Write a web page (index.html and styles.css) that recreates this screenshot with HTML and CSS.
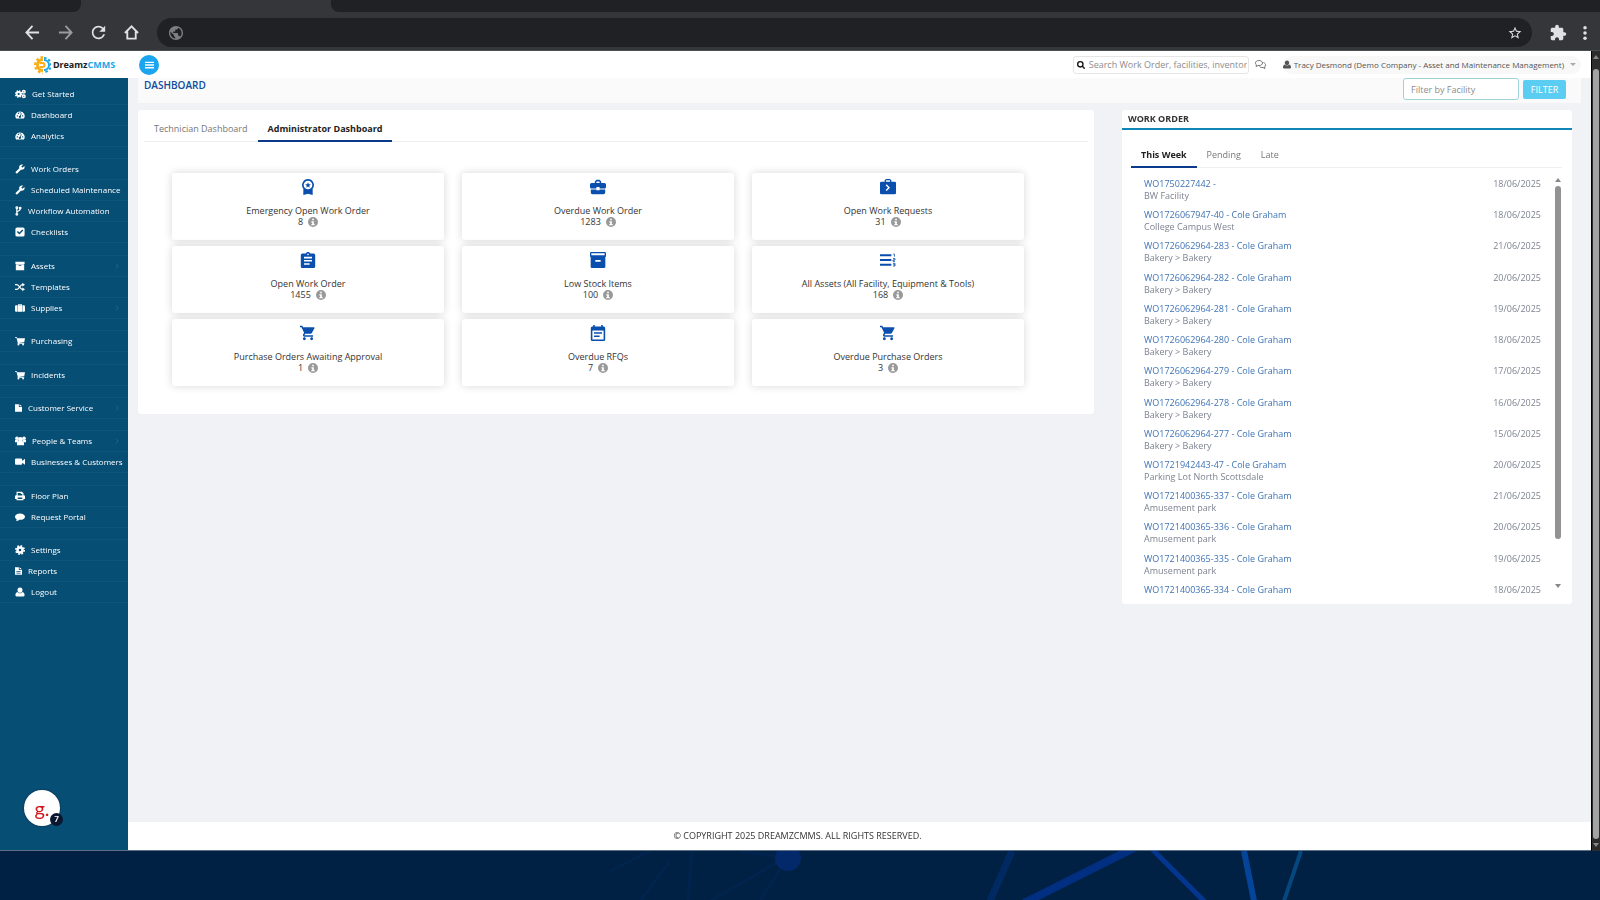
FILE: index.html
```
<!DOCTYPE html>
<html lang="en">
<head>
    <meta charset="UTF-8">
    <meta name="viewport" content="width=device-width, initial-scale=1.0">
    <title>Dashboard - DreamzCMMS</title>
    <link rel="stylesheet" href="styles.css">
</head>
<body>

    <!-- Icon set -->
    <svg class="icon-set" aria-hidden="true">
        <symbol id="gear" viewBox="0 0 24 24"><circle cx="12" cy="12" r="6" fill="none" stroke="currentColor" stroke-width="6"/><circle cx="12" cy="12" r="10" fill="none" stroke="currentColor" stroke-width="4" stroke-dasharray="4 3.85"/></symbol>
        <symbol id="gears" viewBox="0 0 30 24"><circle cx="10" cy="12" r="5.500" fill="none" stroke="currentColor" stroke-width="5"/><circle cx="10" cy="12" r="8.500" fill="none" stroke="currentColor" stroke-width="4" stroke-dasharray="3.500 3.170"/><circle cx="24" cy="6" r="3.500" fill="none" stroke="currentColor" stroke-width="4"/><circle cx="24" cy="18" r="3.500" fill="none" stroke="currentColor" stroke-width="4"/></symbol>
        <symbol id="gauge" viewBox="0 0 28 24"><path fill="currentColor" fill-rule="evenodd" d="M14 2a13 13 0 0 0-11 20h22A13 13 0 0 0 14 2zM5 13h3v3H5zm3-7h3v3H8zm5-2h3v3h-3zm7 9h3v3h-3zm-3-6 2 1-3 7a3 3 0 1 1-2-1z"/></symbol>
        <symbol id="wrench" viewBox="0 0 24 24"><path fill="currentColor" transform="matrix(-1 0 0 1 24 0)" d="M22.7 19l-9.1-9.1c.9-2.3.4-5-1.5-6.9-2-2-5-2.4-7.4-1.3L9 6 6 9 1.6 4.7C.4 7.1.9 10.1 2.9 12.1c1.9 1.9 4.6 2.4 6.9 1.5l9.1 9.1c.4.4 1 .4 1.4 0l2.3-2.3c.5-.4.5-1.1.1-1.4z"/></symbol>
        <symbol id="fork" viewBox="0 0 16 24"><g fill="none" stroke="currentColor" stroke-width="3"><circle cx="4" cy="4" r="2"/><circle cx="4" cy="20" r="2"/><circle cx="12" cy="5" r="2"/><path d="M4 6v12M12 7c0 6-8 4-8 9"/></g></symbol>
        <symbol id="check" viewBox="0 0 24 24"><path fill="currentColor" fill-rule="evenodd" d="M5 1h14a4 4 0 0 1 4 4v14a4 4 0 0 1-4 4H5a4 4 0 0 1-4-4V5a4 4 0 0 1 4-4zm5.500 17L20 8.500 17.500 6l-7 7L7 9.500 4.500 12z"/></symbol>
        <symbol id="archive" viewBox="0 0 24 24"><path fill="currentColor" fill-rule="evenodd" d="M1 2h22v5H1zm1 6h20v14H2zm7 2v2h6v-2z"/></symbol>
        <symbol id="random" viewBox="0 0 26 24"><path fill="none" stroke="currentColor" stroke-width="3.500" d="M0 6h5c6 0 8 12 14 12h2M0 18h5c6 0 8-12 14-12h2"/><path fill="currentColor" d="M19 1l7 5-7 5zM19 13l7 5-7 5z"/></symbol>
        <symbol id="suitcase" viewBox="0 0 26 24"><path fill="currentColor" fill-rule="evenodd" d="M8 5V2h10v3h1v17H7V5zm2 0h6V4h-6zM0 8a3 3 0 0 1 3-3h3v17H3a3 3 0 0 1-3-3zM20 5h3a3 3 0 0 1 3 3v11a3 3 0 0 1-3 3h-3z"/></symbol>
        <symbol id="cart-small" viewBox="0 0 26 24"><path fill="currentColor" d="M0 2h5l1 3h20l-2 10-15 2v1h15v2H7v-4L4 4H0z"/><circle cx="9" cy="21" r="2.500" fill="currentColor"/><circle cx="21" cy="21" r="2.500" fill="currentColor"/></symbol>
        <symbol id="file" viewBox="0 0 20 24"><path fill="currentColor" d="M0 1h11v8h9v14H0zM13 1l7 6h-7z"/></symbol>
        <symbol id="file-text" viewBox="0 0 20 24"><path fill="currentColor" fill-rule="evenodd" d="M0 1h11v8h9v14H0zM13 1l7 6h-7zM4 12v2h12v-2zm0 5v2h12v-2z"/></symbol>
        <symbol id="users" viewBox="0 0 28 24"><g fill="currentColor"><circle cx="14" cy="8" r="6"/><circle cx="5" cy="5" r="4.500"/><circle cx="23" cy="5" r="4.500"/><path d="M5 23v-5c0-4 3-6 5-6h8c2 0 5 2 5 6v5zM0 9h9l-3 6H0zM28 9h-9l3 6h6z"/></g></symbol>
        <symbol id="video" viewBox="0 0 28 24"><path fill="currentColor" d="M3 2h14a3 3 0 0 1 3 3v4l8-6v17l-8-6v3a3 3 0 0 1-3 3H3a3 3 0 0 1-3-3V5a3 3 0 0 1 3-3z"/></symbol>
        <symbol id="print" viewBox="0 0 26 24"><path fill="currentColor" fill-rule="evenodd" d="M4 1h14l4 4v5h1a3 3 0 0 1 3 3v7h-4v3H4v-3H0v-7a3 3 0 0 1 3-3h1zm3 3v7h12V7h-4V4zm0 12v4h12v-4z"/></symbol>
        <symbol id="comment" viewBox="0 0 28 24"><path fill="currentColor" d="M14 2c8 0 14 4 14 9s-6 9-14 9h-2c-3 3-6 4-10 4 2-2 3-3 3-5-3-2-5-5-5-8 0-5 6-9 14-9z"/></symbol>
        <symbol id="user" viewBox="0 0 22 24"><path fill="currentColor" d="M11 1c4 0 6 3 6 6 0 4-2 7-6 7s-6-3-6-7c0-3 2-6 6-6zM5 12c2 4 10 4 12 0 4 1 5 5 5 8 0 2-2 3-4 3H4c-2 0-4-1-4-3 0-3 1-7 5-8z"/></symbol>
        <symbol id="cart" viewBox="0 0 24 24"><path fill="currentColor" d="M7 18c-1.1 0-1.99.9-1.99 2S5.9 22 7 22s2-.9 2-2-.9-2-2-2zM1 2v2h2l3.6 7.59-1.35 2.45c-.16.28-.25.61-.25.96 0 1.1.9 2 2 2h12v-2H7.42c-.14 0-.25-.11-.25-.25l.03-.12.9-1.63h7.45c.75 0 1.41-.41 1.75-1.03l3.58-6.49c.08-.14.12-.31.12-.48 0-.55-.45-1-1-1H5.21l-.94-2H1zm16 16c-1.1 0-1.99.9-1.99 2s.89 2 1.99 2 2-.9 2-2-.9-2-2-2z"/></symbol>
        <symbol id="info" viewBox="0 0 24 24"><path fill="currentColor" fill-rule="evenodd" d="M12 0a12 12 0 1 0 0 24 12 12 0 0 0 0-24zM10 4h4v4h-4zm-2 6h6v7h2v3H8v-3h2v-4H8z"/></symbol>
        <symbol id="chevron" viewBox="0 0 8 12"><path fill="none" stroke="currentColor" stroke-width="1.500" d="M2 1l4 5-4 5"/></symbol>
    </svg>

    <!-- Browser bar -->
    <div class="browser">
        <div class="tab-strip">
            <div class="tab-left"></div>
            <div class="tab-right"></div>
        </div>
        <div class="toolbar">
            <button class="nav-button" aria-label="Back"><svg viewBox="0 0 16 16"><path fill="none" stroke="currentColor" stroke-width="2" d="M15 8H2M8 1L1.500 8 8 15"/></svg></button>
            <button class="nav-button dim" aria-label="Forward"><svg viewBox="0 0 16 16"><path fill="none" stroke="currentColor" stroke-width="2" d="M1 8h13M8 1l6.500 7L8 15"/></svg></button>
            <button class="nav-button" aria-label="Reload"><svg viewBox="3 3 18 18"><path fill="currentColor" d="M17.650 6.350C16.200 4.900 14.210 4 12 4c-4.420 0-7.990 3.580-7.990 8s3.570 8 7.990 8c3.730 0 6.840-2.550 7.730-6h-2.080c-.82 2.330-3.040 4-5.650 4-3.310 0-6-2.690-6-6s2.690-6 6-6c1.660 0 3.140.69 4.220 1.780L13 11h7V4l-2.350 2.350z"/></svg></button>
            <button class="nav-button" aria-label="Home"><svg viewBox="0 0 16 16"><path fill="none" stroke="currentColor" stroke-width="2" d="M1 8.500L8 1.500l7 7M3.500 7v7.500h9V7"/></svg></button>
            <div class="address-bar">
                <svg class="globe" viewBox="2 2 20 20"><path fill="currentColor" d="M12 2C6.480 2 2 6.480 2 12s4.480 10 10 10 10-4.480 10-10S17.520 2 12 2zm-1 17.930c-3.950-.49-7-3.850-7-7.930 0-.62.08-1.210.21-1.790L9 15v1c0 1.100.9 2 2 2v1.930zm6.900-2.540c-.26-.81-1-1.390-1.900-1.390h-1v-3c0-.55-.45-1-1-1H8v-2h2c.55 0 1-.45 1-1V7h2c1.100 0 2-.9 2-2v-.41c2.930 1.190 5 4.060 5 7.410 0 2.080-.8 3.970-2.100 5.390z"/></svg>
                <svg class="star" viewBox="1 1 22 22"><path fill="currentColor" d="M22 9.240l-7.190-.62L12 2 9.190 8.630 2 9.240l5.460 4.730L5.820 21 12 17.270 18.180 21l-1.630-7.030L22 9.240zM12 15.400l-3.760 2.270 1-4.280-3.320-2.880 4.380-.38L12 6.100l1.710 4.040 4.380.38-3.320 2.880 1 4.280L12 15.400z"/></svg>
            </div>
            <button class="nav-button puzzle" aria-label="Extensions"><svg viewBox="1 0 23 23"><path fill="currentColor" d="M20.500 11H19V7c0-1.100-.9-2-2-2h-4V3.500C13 2.120 11.880 1 10.500 1S8 2.120 8 3.500V5H4c-1.100 0-1.990.9-1.990 2v3.800H3.500c1.490 0 2.700 1.210 2.700 2.700s-1.210 2.700-2.700 2.700H2V20c0 1.100.9 2 2 2h3.800v-1.500c0-1.490 1.210-2.700 2.700-2.700 1.490 0 2.700 1.210 2.700 2.700V22H17c1.100 0 2-.9 2-2v-4h1.500c1.380 0 2.500-1.120 2.500-2.500S21.880 11 20.500 11z"/></svg></button>
            <button class="nav-button dots" aria-label="Menu"><svg viewBox="0 0 4 16"><g fill="currentColor"><circle cx="2" cy="2" r="2"/><circle cx="2" cy="8" r="2"/><circle cx="2" cy="14" r="2"/></g></svg></button>
        </div>
    </div>

    <div class="window">
        <div class="app">

            <!-- Header -->
            <header class="header">
                <a href="#" class="logo">
                    <svg class="logo-mark" viewBox="0 0 36 36">
                        <g fill="none" stroke="#f9ae19"><path stroke-width="6" d="M20 7a11 11 0 1 0 0 22"/><path stroke-width="5" stroke-dasharray="5 4.500" d="M20 2.500a15.500 15.500 0 1 0 0 31"/><path stroke-width="4" d="M13 14h6a4 4 0 0 1 0 8h-6"/></g>
                        <g fill="none" stroke="#1ba7e8"><path stroke-width="4" d="M22 8a10 10 0 0 1 0 20"/><path stroke-width="4" stroke-dasharray="5 4" d="M22 4a14 14 0 0 1 0 28"/></g>
                    </svg>
                    <span>Dreamz<span class="logo-blue">CMMS</span></span>
                </a>
                <button class="menu-toggle" aria-label="Toggle menu"><svg viewBox="0 0 10 8"><path stroke="currentColor" stroke-width="1.500" d="M0 1h10M0 4h10M0 7h10"/></svg></button>
                <div class="search-box">
                    <label for="search" aria-label="Search"><svg viewBox="0 0 12 12"><g fill="none" stroke="currentColor" stroke-width="2"><circle cx="5" cy="5" r="4"/><path d="M8 8l3.500 3.500"/></g></svg></label>
                    <input type="text" id="search" placeholder="Search Work Order, facilities, inventory">
                </div>
                <a href="#" class="chat" aria-label="Messages"><svg viewBox="0 0 22 18"><path fill="none" stroke="currentColor" stroke-width="2" d="M8 1c4 0 7 2 7 5s-3 5-7 5H6l-4 2 1-3C1 9 1 7 1 6c0-3 3-5 7-5zM17 5c3 1 4 3 4 5s-1 3-2 4l1 3-4-2c-3 0-6 0-7-2"/></svg></a>
                <button class="account">
                    <svg class="account-icon"><use href="#user"/></svg>
                    Tracy Desmond (Demo Company - Asset and Maintenance Management)
                    <span class="caret"></span>
                </button>
            </header>

            <!-- Sidebar -->
            <nav class="sidebar">
                <div class="menu">
                    <ul>
                        <li><a href="#"><svg class="wide"><use href="#gears"/></svg>Get Started</a></li>
                        <li><a href="#"><svg><use href="#gauge"/></svg>Dashboard</a></li>
                        <li><a href="#"><svg><use href="#gauge"/></svg>Analytics</a></li>
                    </ul>
                    <ul>
                        <li><a href="#"><svg><use href="#wrench"/></svg>Work Orders</a></li>
                        <li><a href="#"><svg><use href="#wrench"/></svg>Scheduled Maintenance</a></li>
                        <li><a href="#"><svg class="narrow"><use href="#fork"/></svg>Workflow Automation</a></li>
                        <li><a href="#"><svg><use href="#check"/></svg>Checklists</a></li>
                    </ul>
                    <ul>
                        <li><a href="#"><svg><use href="#archive"/></svg>Assets<svg class="arrow"><use href="#chevron"/></svg></a></li>
                        <li><a href="#"><svg><use href="#random"/></svg>Templates</a></li>
                        <li><a href="#"><svg><use href="#suitcase"/></svg>Supplies<svg class="arrow"><use href="#chevron"/></svg></a></li>
                    </ul>
                    <ul>
                        <li><a href="#"><svg><use href="#cart-small"/></svg>Purchasing</a></li>
                    </ul>
                    <ul>
                        <li><a href="#"><svg><use href="#cart-small"/></svg>Incidents</a></li>
                    </ul>
                    <ul>
                        <li><a href="#"><svg class="narrow"><use href="#file"/></svg>Customer Service<svg class="arrow"><use href="#chevron"/></svg></a></li>
                    </ul>
                    <ul>
                        <li><a href="#"><svg class="wide"><use href="#users"/></svg>People &amp; Teams<svg class="arrow"><use href="#chevron"/></svg></a></li>
                        <li><a href="#"><svg><use href="#video"/></svg>Businesses &amp; Customers</a></li>
                    </ul>
                    <ul>
                        <li><a href="#"><svg><use href="#print"/></svg>Floor Plan</a></li>
                        <li><a href="#"><svg><use href="#comment"/></svg>Request Portal</a></li>
                    </ul>
                    <ul>
                        <li><a href="#"><svg><use href="#gear"/></svg>Settings</a></li>
                        <li><a href="#"><svg class="narrow"><use href="#file-text"/></svg>Reports</a></li>
                        <li><a href="#"><svg><use href="#user"/></svg>Logout</a></li>
                    </ul>
                </div>
                <button class="help-widget" aria-label="Help">g.<span class="help-badge">7</span></button>
            </nav>

            <!-- Main content -->
            <main class="content">
                <div class="page-title">
                    <h1>DASHBOARD</h1>
                    <form class="filter">
                        <input type="text" placeholder="Filter by Facility" aria-label="Filter by Facility" autofocus>
                        <button type="button">FILTER</button>
                    </form>
                </div>

                <div class="panels">
                    <section class="panel">
                        <div class="tabs">
                            <button class="tab">Technician Dashboard</button>
                            <button class="tab active">Administrator Dashboard</button>
                        </div>
                        <div class="cards">
                            <a href="#" class="card">
                                <svg viewBox="0 0 24 24"><path fill="currentColor" fill-rule="evenodd" d="M12 0a9 9 0 0 0-7 14.500V24l7-2 7 2v-9.500A9 9 0 0 0 12 0zm0 2.500a6.500 6.500 0 1 1 0 13 6.500 6.500 0 0 1 0-13z"/><path fill="currentColor" d="M12 5l1.200 2.800 3 .2-2.300 2 .7 3-2.600-1.600L9.400 13l.7-3-2.300-2 3-.2z"/></svg>
                                <span>Emergency Open Work Order</span>
                                <span class="count">8 <svg><use href="#info"/></svg></span>
                            </a>
                            <a href="#" class="card">
                                <svg viewBox="2 2 20 20"><path fill="currentColor" d="M10 16v-1H3.010L3 19c0 1.110.89 2 2 2h14c1.110 0 2-.89 2-2v-4h-7v1h-4zm10-9h-4.010V5l-2-2h-4l-2 2v2H4c-1.100 0-2 .9-2 2v3c0 1.110.89 2 2 2h6v-2h4v2h6c1.100 0 2-.9 2-2V9c0-1.100-.9-2-2-2zm-6 0h-4V5h4v2z"/></svg>
                                <span>Overdue Work Order</span>
                                <span class="count">1283 <svg><use href="#info"/></svg></span>
                            </a>
                            <a href="#" class="card">
                                <svg viewBox="0 0 24 24"><path fill="currentColor" fill-rule="evenodd" d="M7 4V2l2-2h6l2 2v2h5a2 2 0 0 1 2 2v15a2 2 0 0 1-2 2H2a2 2 0 0 1-2-2V6a2 2 0 0 1 2-2zm2 0h6V2H9zm1 4L8.500 9.500 12 13l-3.500 3.500L10 18l5-5z"/></svg>
                                <span>Open Work Requests</span>
                                <span class="count">31 <svg><use href="#info"/></svg></span>
                            </a>
                            <a href="#" class="card">
                                <svg viewBox="2 1 20 20"><path fill="currentColor" d="M19 3h-4.180C14.400 1.840 13.300 1 12 1c-1.300 0-2.400.84-2.820 2H5c-1.100 0-2 .9-2 2v14c0 1.100.9 2 2 2h14c1.100 0 2-.9 2-2V5c0-1.100-.9-2-2-2zm-7 0c.55 0 1 .45 1 1s-.45 1-1 1-1-.45-1-1 .45-1 1-1zm2 14H7v-2h7v2zm3-4H7v-2h10v2zm0-4H7V7h10v2z"/></svg>
                                <span>Open Work Order</span>
                                <span class="count">1455 <svg><use href="#info"/></svg></span>
                            </a>
                            <a href="#" class="card">
                                <svg viewBox="0 0 24 24"><path fill="currentColor" fill-rule="evenodd" d="M2 0h20a2 2 0 0 1 2 2v5h-1v15a2 2 0 0 1-2 2H3a2 2 0 0 1-2-2V7H0V2a2 2 0 0 1 2-2zm0 2v3h20V2zm6 10v2.500h8V12z"/></svg>
                                <span>Low Stock Items</span>
                                <span class="count">100 <svg><use href="#info"/></svg></span>
                            </a>
                            <a href="#" class="card">
                                <svg viewBox="0 0 24 24"><path fill="none" stroke="currentColor" stroke-width="3" d="M0 5h17M0 12h17M0 19h17"/><path fill="none" stroke="currentColor" stroke-width="1.300" d="M20 3h1.500v4M19.500 10h3v2h-3v2h3M19.500 17h3v4h-3M20 19h2.500"/></svg>
                                <span>All Assets (All Facility, Equipment &amp; Tools)</span>
                                <span class="count">168 <svg><use href="#info"/></svg></span>
                            </a>
                            <a href="#" class="card">
                                <svg viewBox="1 1 22 22"><use href="#cart" width="24" height="24"/></svg>
                                <span>Purchase Orders Awaiting Approval</span>
                                <span class="count">1 <svg><use href="#info"/></svg></span>
                            </a>
                            <a href="#" class="card">
                                <svg viewBox="2 1 20 20"><path fill="currentColor" d="M17 10H7v2h10v-2zm2-7h-1V1h-2v2H8V1H6v2H5c-1.110 0-1.990.9-1.990 2L3 19c0 1.100.89 2 2 2h14c1.100 0 2-.9 2-2V5c0-1.100-.9-2-2-2zm0 16H5V8h14v11zm-5-5H7v2h7v-2z"/></svg>
                                <span>Overdue RFQs</span>
                                <span class="count">7 <svg><use href="#info"/></svg></span>
                            </a>
                            <a href="#" class="card">
                                <svg viewBox="1 1 22 22"><use href="#cart" width="24" height="24"/></svg>
                                <span>Overdue Purchase Orders</span>
                                <span class="count">3 <svg><use href="#info"/></svg></span>
                            </a>
                        </div>
                    </section>

                    <section class="panel work-orders">
                        <h2>WORK ORDER</h2>
                        <div class="tabs">
                            <button class="tab active">This Week</button>
                            <button class="tab">Pending</button>
                            <button class="tab">Late</button>
                        </div>
                        <div class="order-scroll">
                            <ul class="order-list">
                                <li><a href="#">WO1750227442 -</a><time>18/06/2025</time><p>BW Facility</p></li>
                                <li><a href="#">WO1726067947-40 - Cole Graham</a><time>18/06/2025</time><p>College Campus West</p></li>
                                <li><a href="#">WO1726062964-283 - Cole Graham</a><time>21/06/2025</time><p>Bakery &gt; Bakery</p></li>
                                <li><a href="#">WO1726062964-282 - Cole Graham</a><time>20/06/2025</time><p>Bakery &gt; Bakery</p></li>
                                <li><a href="#">WO1726062964-281 - Cole Graham</a><time>19/06/2025</time><p>Bakery &gt; Bakery</p></li>
                                <li><a href="#">WO1726062964-280 - Cole Graham</a><time>18/06/2025</time><p>Bakery &gt; Bakery</p></li>
                                <li><a href="#">WO1726062964-279 - Cole Graham</a><time>17/06/2025</time><p>Bakery &gt; Bakery</p></li>
                                <li><a href="#">WO1726062964-278 - Cole Graham</a><time>16/06/2025</time><p>Bakery &gt; Bakery</p></li>
                                <li><a href="#">WO1726062964-277 - Cole Graham</a><time>15/06/2025</time><p>Bakery &gt; Bakery</p></li>
                                <li><a href="#">WO1721942443-47 - Cole Graham</a><time>20/06/2025</time><p>Parking Lot North Scottsdale</p></li>
                                <li><a href="#">WO1721400365-337 - Cole Graham</a><time>21/06/2025</time><p>Amusement park</p></li>
                                <li><a href="#">WO1721400365-336 - Cole Graham</a><time>20/06/2025</time><p>Amusement park</p></li>
                                <li><a href="#">WO1721400365-335 - Cole Graham</a><time>19/06/2025</time><p>Amusement park</p></li>
                                <li><a href="#">WO1721400365-334 - Cole Graham</a><time>18/06/2025</time></li>
                            </ul>
                            <div class="scrollbar light">
                                <span class="up"></span>
                                <span class="thumb"></span>
                                <span class="down"></span>
                            </div>
                        </div>
                    </section>
                </div>

                <footer class="footer">© COPYRIGHT 2025 DREAMZCMMS. ALL RIGHTS RESERVED.</footer>
            </main>
        </div>

        <div class="scrollbar dark">
            <span class="up"></span>
            <span class="thumb"></span>
            <span class="down"></span>
        </div>
    </div>

    <!-- Wallpaper under the window -->
    <div class="wallpaper">
        <svg viewBox="0 0 1600 50" preserveAspectRatio="xMidYMin slice">
            <g fill="none">
                <path stroke="#012a5c" stroke-width="3" opacity=".4" d="M780 10L710 50M783 14L760 50M650 0L610 20M692 0L688 50M670 10L640 50M740 0l40 6"/>
                <path stroke="#012a63" stroke-width="7" d="M1012 0L990 50"/>
                <path stroke="#022f82" stroke-width="8" d="M1136 -4L1024 52"/>
                <path stroke="#04358f" stroke-width="5" d="M1150 -4L1206 52"/>
                <path stroke="#04459a" stroke-width="6" d="M1244 0L1254 50"/>
                <path stroke="#04487f" stroke-width="4" d="M1301 0L1284 50"/>
            </g>
            <circle cx="788" cy="7" r="13" fill="#03296a"/>
        </svg>
    </div>

</body>
</html>
```
FILE: styles.css
```
* {
    margin: 0;
    padding: 0;
    box-sizing: border-box;
}

body {
    display: flex;
    flex-direction: column;
    min-height: 100vh;
    font-family: "Open Sans", "Noto Sans", sans-serif;
    font-size: 9px;
    line-height: 12px;
    color: #333;
    background-color: #012144;
}

ul {
    list-style: none;
}

a {
    color: inherit;
    text-decoration: none;
}

button,
input {
    font: inherit;
    border: none;
    background: none;
    color: inherit;
}

button {
    cursor: pointer;
}

svg {
    display: block;
    flex-shrink: 0;
}

.icon-set {
    position: absolute;
    width: 0;
    height: 0;
}

/* Browser bar */
.browser {
    background-color: #35363a;
    border-bottom: 1px solid #4b4c52;
}

.tab-strip {
    display: flex;
    height: 12px;
}

.tab-left {
    width: 81px;
    background-color: #202124;
    border-bottom-right-radius: 8px;
}

.tab-right {
    flex: 1;
    margin-left: 250px;
    background-color: #202124;
    border-bottom-left-radius: 8px;
}

.toolbar {
    display: flex;
    align-items: center;
    gap: 18px;
    height: 38px;
    padding: 3px 13px 0 25px;
}

.nav-button {
    color: #dfe1e5;
}

.nav-button svg {
    width: 15px;
    height: 15px;
}

.nav-button.dim {
    color: #999b9f;
}

.nav-button.puzzle svg {
    width: 17px;
    height: 17px;
}

.nav-button.dots {
    margin-left: -2px;
}

.nav-button.dots svg {
    width: 4px;
    height: 14px;
}

.address-bar {
    flex: 1;
    display: flex;
    align-items: center;
    justify-content: space-between;
    height: 29px;
    padding: 0 10px 0 12px;
    border-radius: 15px;
    background-color: #202124;
}

.globe {
    width: 14px;
    height: 14px;
    color: #7c7e82;
}

.star {
    width: 14px;
    height: 14px;
    color: #dfe1e5;
}

/* App window */
.window {
    flex: 1;
    display: flex;
}

.app {
    flex: 1;
    display: grid;
    grid-template-columns: 128px 1fr;
    grid-template-rows: 27px 1fr;
    border-bottom: 1px solid #5b6f86;
    background-color: #f0f2f6;
}

.header {
    grid-column: 1 / 3;
    display: flex;
    align-items: center;
    padding-right: 10px;
    background-color: #fff;
}

.logo {
    display: flex;
    align-items: center;
    gap: 2px;
    width: 139px;
    padding-left: 33px;
    font-family: "Noto Sans", sans-serif;
    font-weight: 700;
    color: #222;
}

.logo-blue {
    color: #1ba7e8;
}

.logo-mark {
    width: 18px;
    height: 18px;
}

.menu-toggle {
    display: flex;
    align-items: center;
    justify-content: center;
    width: 20px;
    height: 20px;
    border-radius: 50%;
    background-color: #1aa5ee;
    color: #fff;
}

.menu-toggle svg {
    width: 9px;
    height: 8px;
}

.search-box {
    display: flex;
    align-items: center;
    gap: 4px;
    width: 176px;
    height: 18px;
    margin-left: auto;
    padding: 0 1px 0 3px;
    border: 1px solid #e6e6e6;
    border-radius: 3px;
}

.search-box svg {
    width: 8px;
    height: 8px;
    color: #111;
}

.search-box input {
    flex: 1;
    min-width: 0;
}

input::placeholder {
    color: #8c8c8c;
    opacity: 1;
}

.chat {
    margin: 0 17px 0 6px;
    color: #777;
}

.chat svg {
    width: 11px;
    height: 9px;
}

.account {
    display: flex;
    align-items: center;
    gap: 3px;
    height: 18px;
    padding: 0 5px 0 0;
    border-radius: 9px;
    background-color: #f8f8f8;
    color: #555;
    font-size: 8px;
}

.account-icon {
    width: 8px;
    height: 9px;
}

.caret {
    margin-left: 3px;
    border: 3px solid transparent;
    border-top-color: #aaa;
    border-bottom: none;
}

/* Sidebar */
.sidebar {
    position: relative;
    padding-top: 6px;
    background-color: #074e75;
    color: #fff;
    font-size: 8px;
}

.menu {
    display: flex;
    flex-direction: column;
    justify-content: space-between;
    min-height: 519px;
}

.menu ul {
    border-top: 1px solid #0f557b;
}

.menu ul:first-child {
    border-top: none;
}

.menu li {
    border-bottom: 1px solid #0f557b;
}

.menu a {
    display: flex;
    align-items: center;
    gap: 6px;
    height: 20px;
    padding-left: 15px;
    white-space: nowrap;
}

.menu svg {
    width: 10px;
    height: 10px;
}

.menu svg.wide {
    width: 11px;
}

.menu svg.narrow {
    width: 7px;
}

.menu svg.arrow {
    width: 4px;
    height: 6px;
    margin: 0 9px 0 auto;
    color: #2c6b8d;
}

.help-widget {
    position: absolute;
    left: 24px;
    bottom: 24px;
    width: 36px;
    height: 36px;
    border-radius: 50%;
    background-color: #fff;
    box-shadow: 0 0 2px #123;
    color: #d0161b;
    font-family: Lato, sans-serif;
    font-size: 20px;
    line-height: 30px;
}

.help-badge {
    position: absolute;
    right: -3px;
    bottom: 0;
    width: 13px;
    height: 13px;
    border-radius: 50%;
    background-color: #0b1730;
    color: #fff;
    font-size: 8px;
    font-weight: 700;
    line-height: 13px;
}

/* Main content */
.content {
    display: flex;
    flex-direction: column;
}

.page-title {
    display: flex;
    justify-content: space-between;
    height: 25px;
    margin: 0 10px 7px;
    padding: 0 15px 0 6px;
    background-color: #fafafb;
}

.page-title h1 {
    color: #0c4a9a;
    font-size: 10px;
    font-weight: 600;
    line-height: 15px;
}

.filter {
    display: flex;
    align-items: flex-start;
    gap: 4px;
}

.filter input {
    width: 116px;
    height: 22px;
    padding: 0 7px;
    border: 1px solid #9fd3d8;
    border-radius: 3px;
    outline: none;
    background-color: #fff;
}

.filter button {
    width: 43px;
    height: 19px;
    margin-top: 2px;
    border-radius: 2px;
    background-color: #5bcdf2;
    color: #fff;
}

.panels {
    flex: 1;
    display: grid;
    grid-template-columns: 956fr 450fr;
    align-items: start;
    gap: 28px;
    padding: 0 19px 0 10px;
}

.panel {
    background-color: #fff;
    border-radius: 3px;
}

.tabs {
    display: flex;
    margin: 0 6px;
    border-bottom: 1px solid #eee;
}

.tab {
    height: 32px;
    margin-bottom: -1px;
    padding: 8px 10px 0;
    border-bottom: 2px solid transparent;
    color: #777;
}

.tab.active {
    border-bottom-color: #0b3a8c;
    color: #222;
    font-weight: 700;
}

.cards {
    display: grid;
    grid-template-columns: repeat(3, 1fr);
    gap: 6px 18px;
    padding: 31px 70px 28px 34px;
}

.card {
    display: flex;
    flex-direction: column;
    align-items: center;
    height: 67px;
    padding-top: 6px;
    border-radius: 3px;
    background-color: #fff;
    box-shadow: 0 0 8px rgba(0, 0, 0, 0.16);
    line-height: 11px;
}

.card > svg {
    width: 16px;
    height: 16px;
    margin-bottom: 10px;
    color: #0a4fae;
}

.count {
    display: flex;
    align-items: center;
    gap: 5px;
}

.count svg {
    width: 10px;
    height: 10px;
    color: #999;
}

/* Work orders */
.work-orders {
    padding-bottom: 8px;
}

.work-orders h2 {
    padding: 3px 6px;
    border-bottom: 2px solid #0f86b8;
    font-size: 9px;
    font-weight: 700;
    line-height: 12px;
}

.work-orders .tabs {
    margin: 6px 10px 0 9px;
}

.order-scroll {
    display: flex;
    justify-content: space-between;
    margin-top: 10px;
    padding: 0 11px 0 22px;
}

.order-list {
    flex: 1;
    display: flex;
    flex-direction: column;
    justify-content: space-between;
    min-height: 418px;
    margin-right: 14px;
}

.order-list li {
    display: grid;
    grid-template-columns: 1fr auto;
    color: #7d8390;
}

.order-list li a {
    color: #3f74b5;
}

/* Scrollbars */
.scrollbar {
    display: flex;
    flex-direction: column;
    align-items: center;
    width: 6px;
}

.scrollbar .thumb {
    width: 6px;
    border-radius: 3px;
    background-color: #929292;
}

.scrollbar .up,
.scrollbar .down {
    border: 3px solid transparent;
}

.scrollbar .up {
    border-top: none;
    border-bottom: 4px solid #888;
}

.scrollbar .down {
    margin-top: auto;
    border-bottom: none;
    border-top: 4px solid #888;
}

.scrollbar.light {
    margin-bottom: 8px;
}

.scrollbar.light .thumb {
    height: 86%;
    margin-top: 4px;
}

.scrollbar.dark {
    width: 9px;
    padding: 4px 0;
    border-left: 1px solid #000;
    background-color: #2c2c2c;
}

.scrollbar.dark .thumb {
    flex: 1;
    margin: 10px 0 4px;
    background-color: #a3a3a3;
}

.footer {
    height: 28px;
    padding-right: 124px;
    background-color: #fff;
    line-height: 27px;
    text-align: center;
}

/* Wallpaper */
.wallpaper {
    height: 49px;
    overflow: hidden;
}

.wallpaper svg {
    width: 100%;
    height: 50px;
}
```
